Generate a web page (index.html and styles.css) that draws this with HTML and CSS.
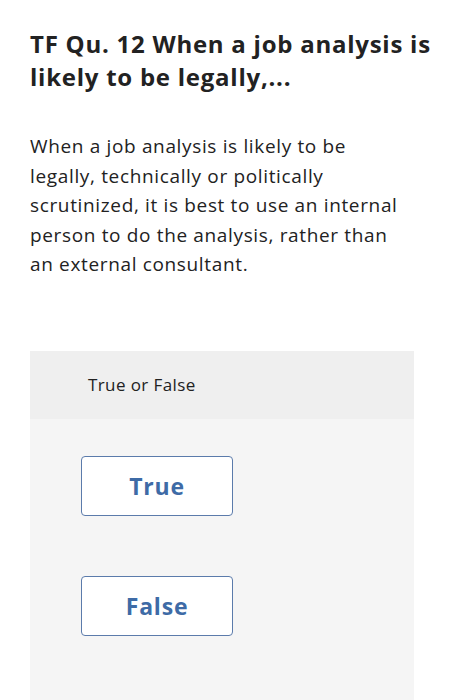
FILE: index.html
```html
<!DOCTYPE html>
<html>
<head>
<meta charset="utf-8">
<link rel="stylesheet" href="styles.css">
</head>
<body>
<div class="page">
  <h1 class="title">TF Qu. 12 When a job analysis is<br>likely to be legally,...</h1>
  <p class="question">When a job analysis is likely to be<br>legally, technically or politically<br>scrutinized, it is best to use an internal<br>person to do the analysis, rather than<br>an external consultant.</p>
  <div class="panel">
    <div class="panel-head">True or False</div>
    <div class="panel-body">
      <button class="choice">True</button>
      <button class="choice">False</button>
    </div>
  </div>
</div>
</body>
</html>
```

FILE: styles.css
```css
html, body {
  margin: 0;
  padding: 0;
  background: #ffffff;
}
body {
  font-family: "Open Sans", "Liberation Sans", sans-serif;
  color: #222222;
}
.page {
  padding: 27px 10px 0 30px;
}
.title {
  margin: 0;
  font-size: 24px;
  line-height: 33px;
  font-weight: 700;
  color: #222222;
  letter-spacing: 0.75px;
  white-space: nowrap;
}
.question {
  margin: 39px 0 0 0;
  font-size: 19px;
  line-height: 29.5px;
  color: #222222;
  letter-spacing: 0.65px;
  white-space: nowrap;
}
.panel {
  margin-top: 71px;
  width: 384px;
  background: #f5f5f5;
  height: 360px;
}
.panel-head {
  background: #efefef;
  height: 68px;
  display: flex;
  align-items: center;
  padding-left: 58px;
  font-size: 17px;
  letter-spacing: 0.4px;
  color: #222222;
}
.panel-body {
  display: flex;
  flex-direction: column;
  align-items: flex-start;
  gap: 60px;
  padding: 37px 0 0 51px;
}
.choice {
  width: 152px;
  height: 60px;
  background: #ffffff;
  border: 1px solid #5b7bab;
  border-radius: 4px;
  font-family: inherit;
  font-size: 23px;
  font-weight: 700;
  letter-spacing: 0.8px;
  color: #3e6ba6;
  padding: 0;
}
```
